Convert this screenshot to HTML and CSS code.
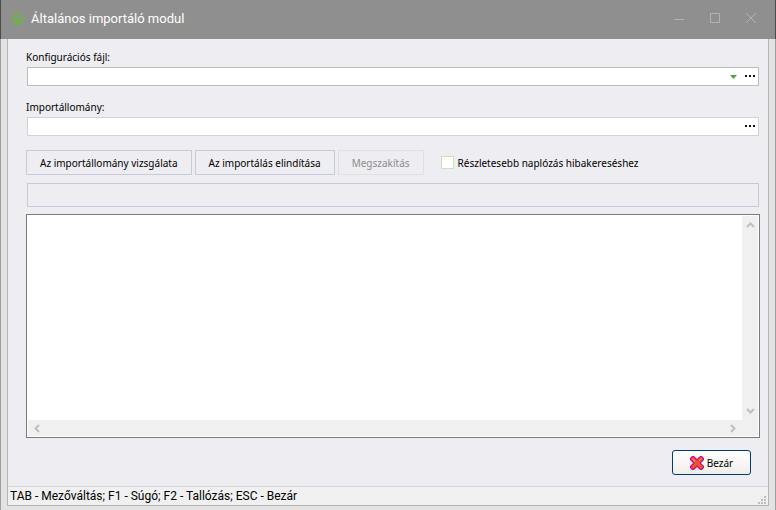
FILE: index.html
```html
<!DOCTYPE html>
<html lang="hu">
<head>
<meta charset="utf-8">
<title>Általános importáló modul</title>
<link rel="stylesheet" href="styles.css">
</head>
<body>
<header class="titlebar">
  <svg class="app-icon" width="14" height="14" viewBox="0 0 14 14" fill="none" stroke="#66bd32" stroke-width="1">
    <path d="M6.500 14V9.500L3 6M7.500 14V9.500L11 6M7 9V5M3 9.500h3M11 9.500H8"/>
    <path d="M1 4.500h2M3 3.500h3M6 2.500h2M8 3.500h3M11 4.500h2M0 7.500h3M11 7.500h3M1 9.500h1M12 9.500h1M4 1.500h2M8 1.500h2M2 11.500h3M9 11.500h3M4 5.500h2M8 5.500h2"/>
  </svg>
  <h1 class="title">Általános importáló modul</h1>
  <div class="window-buttons">
    <button class="window-button" aria-label="Kis méret"><svg width="12" height="12" viewBox="0 0 12 12"><path d="M1 6.500h10"/></svg></button>
    <button class="window-button" aria-label="Teljes méret"><svg width="12" height="12" viewBox="0 0 12 12"><path d="M1.500 .5h9v9h-9z"/></svg></button>
    <button class="window-button" aria-label="Bezárás"><svg width="12" height="12" viewBox="0 0 12 12"><path d="M1 0l10 10M11 0L1 10"/></svg></button>
  </div>
</header>
<div class="frame">
  <div class="client">
    <main class="content">
      <div class="field">
        <label class="label" for="config">Konfigurációs fájl:</label>
        <div class="combo combo-strong">
          <input class="combo-input" id="config" type="text">
          <button class="combo-button" aria-label="Lista"><svg width="8" height="4" viewBox="0 0 8 4"><path d="M0 0h7L3.500 4z" fill="#4fa040"/></svg></button>
          <button class="combo-button" aria-label="Konfigurációs fájl tallózása"><svg width="10" height="4" viewBox="0 0 10 4"><path d="M0 0h2v2H0zM4 0h2v2H4zM8 0h2v2H8z" fill="#111"/></svg></button>
        </div>
      </div>
      <div class="field">
        <label class="label" for="import">Importállomány:</label>
        <div class="combo">
          <input class="combo-input" id="import" type="text">
          <button class="combo-button" aria-label="Importállomány tallózása"><svg width="10" height="4" viewBox="0 0 10 4"><path d="M0 0h2v2H0zM4 0h2v2H4zM8 0h2v2H8z" fill="#111"/></svg></button>
        </div>
      </div>
      <div class="actions">
        <button class="action">Az importállomány vizsgálata</button>
        <button class="action">Az importálás elindítása</button>
        <button class="action" disabled>Megszakítás</button>
        <label class="check"><input class="check-box" type="checkbox">Részletesebb naplózás hibakereséshez</label>
      </div>
      <div class="progress" role="progressbar" aria-label="Folyamat"></div>
      <div class="log">
        <textarea class="log-text" aria-label="Napló"></textarea>
        <div class="scroll scroll-vertical">
          <svg width="9" height="8" viewBox="0 0 9 8"><path d="M1 6l3.500-3.500L8 6"/></svg>
          <svg width="9" height="8" viewBox="0 0 9 8"><path d="M1 2l3.500 3.500L8 2"/></svg>
        </div>
        <div class="scroll scroll-horizontal">
          <svg width="8" height="9" viewBox="0 0 8 9"><path d="M6 1L2.500 4.500L6 8"/></svg>
          <svg width="8" height="9" viewBox="0 0 8 9"><path d="M2 1l3.500 3.500L2 8"/></svg>
        </div>
        <div class="scroll"></div>
      </div>
      <div class="footer">
        <button class="close">
          <svg width="14" height="14" viewBox="0 0 14 14" fill="none"><path d="M3 3l8 8M11 3l-8 8" stroke="#f0f" stroke-width="5.600" stroke-linecap="square" stroke-dasharray="1 .6"/><path d="M3 3l8 8M11 3l-8 8" stroke="#a3195a" stroke-width="4.600" stroke-linecap="square"/><path d="M3 3l8 8M11 3l-8 8" stroke="#ee5230" stroke-width="3.200" stroke-linecap="square"/><path d="M2.500 3l2.500 2.500M9 5l2.500-2.500" stroke="#ffb080"/></svg>
          Bezár
        </button>
      </div>
    </main>
    <footer class="status">
      <span>TAB - Mezőváltás; F1 - Súgó; F2 - Tallózás; ESC - Bezár</span>
      <svg width="8" height="8" viewBox="0 0 8 8" fill="#bdbdbd"><path d="M6 0h2v2H6zM3 3h2v2H3zM6 3h2v2H6zM0 6h2v2H0zM3 6h2v2H3zM6 6h2v2H6z"/></svg>
    </footer>
  </div>
</div>
</body>
</html>
```
FILE: styles.css
```css
* {
  box-sizing: border-box;
}

body {
  margin: 0;
  min-height: 100vh;
  display: flex;
  flex-direction: column;
  font-family: "Noto Sans", sans-serif;
  font-size: 10px;
  line-height: 14px;
  color: #000;
}

button,
input,
textarea {
  font: inherit;
  color: inherit;
  margin: 0;
  padding: 0;
  border: 0;
  background: none;
}

svg {
  display: block;
  flex: none;
}

.titlebar {
  display: flex;
  align-items: center;
  height: 39px;
  padding: 0 6px 2px 10px;
  border: solid #4a4a4a;
  border-width: 0 1px;
  background: #8f8f8f;
}

.title {
  flex: 1;
  margin: 0 0 0 6px;
  font-family: Roboto, sans-serif;
  font-size: 13px;
  line-height: 18px;
  font-weight: 400;
  color: #fff;
}

.window-buttons {
  display: flex;
}

.window-button {
  width: 36px;
  height: 24px;
  display: grid;
  place-items: center;
}

.window-button path {
  fill: none;
  stroke: #b3b3b3;
}

.frame {
  flex: 1;
  display: flex;
  padding: 0 6px 4px;
  border: solid #a0a0a0;
  border-width: 0 1px;
  background: #e3e3e3;
}

.client {
  flex: 1;
  display: flex;
  flex-direction: column;
  border: 1px solid #b5b5b5;
  border-top: 0;
  background: #eeedf2;
}

.content {
  flex: 1;
  display: flex;
  flex-direction: column;
  padding: 11px 8px 11px 18px;
}

.field {
  display: flex;
  flex-direction: column;
  gap: 3px;
  margin-bottom: 14px;
}

.combo {
  display: flex;
  align-items: center;
  height: 19px;
  margin: 0 1px;
  border: 1px solid #d3d3d3;
  background: #fff;
}

.combo-strong {
  border-color: #bdbdbd;
}

.combo-input {
  flex: 1;
  min-width: 0;
  outline: 0;
}

.combo-button {
  width: 16px;
  height: 16px;
  display: grid;
  place-items: center;
}

.actions {
  display: flex;
  gap: 3px;
}

.action {
  height: 25px;
  padding: 0 13px;
  border: 1px solid #c9c9dd;
}

.action:disabled {
  border-color: #dfdfe6;
  color: #8c8c8c;
}

.check {
  display: flex;
  align-items: center;
  gap: 4px;
  margin-left: 14px;
}

.check-box {
  appearance: none;
  width: 13px;
  height: 13px;
  border: 1px solid #c5e3bd;
  background: #fff;
}

.progress {
  height: 24px;
  margin: 8px 1px 7px;
  border: 1px solid #c9c9dd;
}

.log {
  flex: 1;
  display: grid;
  grid-template: 1fr 16px / 1fr 16px;
  min-height: 120px;
  padding: 1px;
  border: 1px solid #7a7a7a;
  background: #fff;
}

.log-text {
  resize: none;
  outline: 0;
}

.scroll {
  display: flex;
  align-items: center;
  justify-content: space-between;
  background: #f0f0f0;
}

.scroll-vertical {
  flex-direction: column;
  padding: 5px 0;
}

.scroll-horizontal {
  padding: 0 5px;
}

.scroll path {
  fill: none;
  stroke: #bfbfbf;
  stroke-width: 2;
}

.footer {
  display: flex;
  justify-content: flex-end;
  padding: 12px 9px 0 0;
}

.close {
  display: flex;
  align-items: center;
  justify-content: center;
  gap: 3px;
  width: 79px;
  height: 25px;
  border: 1px solid #003c74;
  border-radius: 3px;
  background: linear-gradient(#fff, #f0eeea);
}

.status {
  display: flex;
  align-items: flex-end;
  justify-content: space-between;
  height: 19px;
  padding: 0 2px 1px;
  border-top: 1px solid #d7d7d7;
  background: #f0f0f0;
  font-family: Roboto, sans-serif;
  font-size: 12px;
  line-height: 16px;
}
```
